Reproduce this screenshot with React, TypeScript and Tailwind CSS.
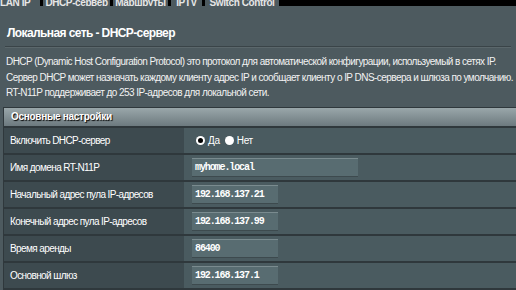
const tabs = [
  { label: 'LAN IP', w: 'w-[40px]' },
  { label: 'DHCP-сервер', w: 'w-[67px]' },
  { label: 'Маршруты', w: 'w-[55px]' },
  { label: 'IPTV', w: 'w-[31px]' },
  { label: 'Switch Control', w: 'w-[74px]' },
]

type Row = { label: string; value?: string; wide?: boolean; radio?: boolean }

const rows: Row[] = [
  { label: 'Включить DHCP-сервер', radio: true },
  { label: 'Имя домена RT-N11P', value: 'myhome.local', wide: true },
  { label: 'Начальный адрес пула IP-адресов', value: '192.168.137.21' },
  { label: 'Конечный адрес пула IP-адресов', value: '192.168.137.99' },
  { label: 'Время аренды', value: '86400' },
  { label: 'Основной шлюз', value: '192.168.137.1' },
]

function Radio({ checked, label }: { checked?: boolean; label: string }) {
  return (
    <label className="flex items-center gap-[3px]">
      <span className="w-[9px] h-[9px] rounded-full bg-white flex items-center justify-center">
        {checked && <span className="w-[5px] h-[5px] rounded-full bg-black" />}
      </span>
      <span>{label}</span>
    </label>
  )
}

export default function App() {
  return (
    <div className="w-[516px] h-[290px] overflow-hidden bg-[#4d5a5f] text-white font-['Liberation_Sans',Arial,sans-serif]">
      {/* tab strip, mostly scrolled out of view */}
      <div className="h-[6px] flex gap-[3px] bg-black">
        {tabs.map((t, i) => (
          <div
            key={t.label}
            className={[
              t.w,
              'shrink-0 h-[6px] overflow-hidden flex items-end bg-[#4d5a5f]',
              i === 0 ? 'justify-start' : 'justify-center',
            ].join(' ')}>
            <span className="text-[10px] leading-[10px] font-bold tracking-[-0.4px] text-[#e6e6e6] whitespace-nowrap translate-y-[2px]">{t.label}</span>
          </div>
        ))}
      </div>

      <div className="pt-[19px]">
        <h1 className="pl-[7px] text-[12px] font-bold leading-[16px] tracking-[-0.6px] text-white">Локальная сеть - DHCP-сервер</h1>
        <div className="mt-[5px] mx-[5px] h-[2px] border-t border-[#3a4448] border-b-[#5b676b] border-b" />

        <div className="pl-[6px] pt-[6px] text-[10px] leading-[15.5px] text-[#f2f2f2] tracking-[-0.55px] whitespace-nowrap">
          <p>DHCP (Dynamic Host Configuration Protocol) это протокол для автоматической конфигурации, используемый в сетях IP.</p>
          <p>Сервер DHCP может назначать каждому клиенту адрес IP и сообщает клиенту о IP DNS-сервера и шлюза по умолчанию.</p>
          <p>RT-N11P поддерживает до 253 IP-адресов для локальной сети.</p>
        </div>

        <div className="mt-[6px] ml-[3px] border-l border-t border-[#2f383c]">
          <div className="h-[20px] pl-[7px] flex items-center bg-gradient-to-b from-[#9aa7aa] to-[#6d7a7f] border-b-2 border-[#2f383c] text-[10px] font-bold tracking-[-0.3px] [text-shadow:1px_1px_1px_#000]">
            Основные настройки
          </div>
          {rows.map(r => (
            <div key={r.label} className="flex h-[27px] border-b-2 border-[#2f383c] text-[10px]">
              <div className="w-[180px] shrink-0 bg-[#3d4a4f] pl-[6px] flex items-center tracking-[-0.6px] whitespace-nowrap">{r.label}</div>
              <div className="flex-1 bg-[#4a5b60] pl-[8px] flex items-center">
                {r.radio ? (
                  <div className="flex items-center gap-[5px] pl-[4px] pt-[1px] tracking-[-0.3px]">
                    <Radio checked label="Да" />
                    <Radio label="Нет" />
                  </div>
                ) : (
                  <div
                    className={[
                      r.wide ? 'w-[166px]' : 'w-[86px]',
                      'h-[19px] bg-[#586c71] border-t border-[#7a8b8f] border-b border-b-[#3d4a4e] pl-[3px] flex items-center',
                      "font-['Liberation_Mono',monospace] text-[10px] font-bold tracking-[-1.1px] text-white",
                    ].join(' ')}>
                    {r.value}
                  </div>
                )}
              </div>
            </div>
          ))}
        </div>
      </div>
    </div>
  )
}
